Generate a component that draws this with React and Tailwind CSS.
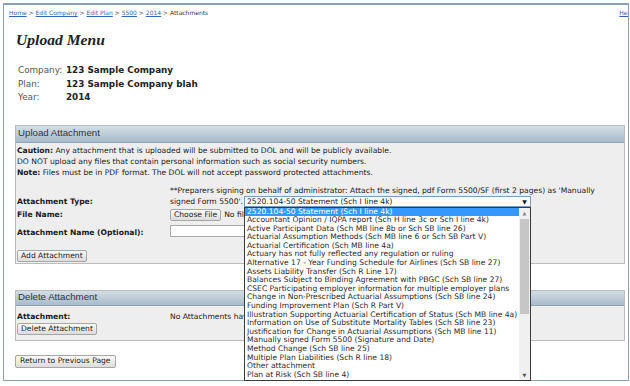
const ITEMS = [
  "2520.104-50 Statement (Sch I line 4k)",
  "Accountant Opinion / IQPA report (Sch H line 3c or Sch I line 4k)",
  "Active Participant Data (Sch MB line 8b or Sch SB line 26)",
  "Actuarial Assumption Methods (Sch MB line 6 or Sch SB Part V)",
  "Actuarial Certification (Sch MB line 4a)",
  "Actuary has not fully reflected any regulation or ruling",
  "Alternative 17 - Year Funding Schedule for Airlines (Sch SB line 27)",
  "Assets Liability Transfer (Sch R Line 17)",
  "Balances Subject to Binding Agreement with PBGC (Sch SB line 27)",
  "CSEC Participating employer information for multiple employer plans",
  "Change in Non-Prescribed Actuarial Assumptions (Sch SB line 24)",
  "Funding Improvement Plan (Sch R Part V)",
  "Illustration Supporting Actuarial Certification of Status (Sch MB line 4a)",
  "Information on Use of Substitute Mortality Tables (Sch SB line 23)",
  "Justification for Change in Actuarial Assumptions (Sch MB line 11)",
  "Manually signed Form 5500 (Signature and Date)",
  "Method Change (Sch SB line 25)",
  "Multiple Plan Liabilities (Sch R line 18)",
  "Other attachment",
  "Plan at Risk (Sch SB line 4)",
];

function Btn({ children, className = "" }) {
  return (
    <span
      className={
        "inline-flex items-center h-[12px] px-[3px] border border-[#a6a6a6] rounded-[2px] bg-linear-to-b from-[#fbfbfb] to-[#dcdcdc] text-[7.6px] leading-none text-[#222] whitespace-nowrap " +
        className
      }
    >
      {children}
    </span>
  );
}

function PanelHeader({ children, h }) {
  return (
    <div
      className={
        "bg-linear-to-b from-[#d3dee7] to-[#a7bbca] border-b border-[#8ea3b4] pl-[2px] font-['Liberation_Sans',Arial,sans-serif] text-[9.7px] text-[#333] flex items-center " +
        h
      }
    >
      {children}
    </div>
  );
}

export default function App() {
  return (
    <div className="w-[630px] h-[386px] bg-white overflow-hidden font-['DejaVu_Sans',Verdana,sans-serif]">
      <div className="ml-[3px] mt-[3px] w-[626px] h-[378px] border border-t-2 border-[#8aa0b6] relative">
        {/* breadcrumb */}
        <div className="flex justify-between pl-[5px] pt-[3px] h-[15px] text-[6px] leading-[10px] text-[#333] overflow-hidden">
          <div>
            <span className="text-[#3a63b0] underline">Home</span> &gt;{" "}
            <span className="text-[#3a63b0] underline">Edit Company</span> &gt;{" "}
            <span className="text-[#3a63b0] underline">Edit Plan</span> &gt;{" "}
            <span className="text-[#3a63b0] underline">5500</span> &gt;{" "}
            <span className="text-[#3a63b0] underline">2014</span> &gt; Attachments
          </div>
          <span className="text-[#3a63b0] underline mr-[-5px]">Help</span>
        </div>

        <h1 className="mt-[11px] pl-[12px] font-['Liberation_Serif',serif] italic font-bold text-[15.6px] leading-[18px] text-[#222]">
          Upload Menu
        </h1>

        <div className="mt-[15px] pl-[14px] grid grid-cols-[48px_auto] text-[8.8px] leading-[13.5px]">
          <span className="text-[#555]">Company:</span>
          <span className="font-bold text-[#222]">123 Sample Company</span>
          <span className="text-[#555]">Plan:</span>
          <span className="font-bold text-[#222]">123 Sample Company blah</span>
          <span className="text-[#555]">Year:</span>
          <span className="font-bold text-[#222]">2014</span>
        </div>

        {/* Upload panel */}
        <div className="mt-[20px] ml-[11px] w-[610px] border border-[#bcbcbc] bg-[#eeeeee]">
          <PanelHeader h="h-[17px]">Upload Attachment</PanelHeader>
          <div className="pl-[1px] pt-[2px] pb-[1px] text-[7.6px] leading-[11px] text-[#1a1a1a]">
            <div>
              <b>Caution:</b> Any attachment that is uploaded will be submitted to DOL and will be publicly available.
              <br />
              DO NOT upload any files that contain personal information such as social security numbers.
            </div>
            <div>
              <b>Note:</b> Files must be in PDF format. The DOL will not accept password protected attachments.
            </div>

            <div className="mt-[7px] flex">
              <div className="w-[153px] shrink-0 font-bold self-end">Attachment Type:</div>
              <div className="whitespace-nowrap">
                **Preparers signing on behalf of administrator: Attach the signed, pdf Form 5500/SF (first 2 pages) as 'Manually
                <br />
                signed Form 5500'.
                <span className="relative inline-block align-top ml-[1px] w-[287px] h-[11px] bg-white border border-[#7f9db9]">
                  <span className="absolute left-[2px] top-0 leading-[9px] whitespace-nowrap">
                    2520.104-50 Statement (Sch I line 4k)
                  </span>
                  <span className="absolute right-[3px] top-0 leading-[9px] text-[6px]">▼</span>
                  <div className="absolute left-[-1px] top-[10px] w-[287px] h-[174px] border border-[#3a3a3a] bg-white z-10 overflow-hidden">
                    <div className="absolute left-0 top-0 right-[11px]">
                      {ITEMS.map((t, i) => (
                        <div
                          key={t}
                          className={
                            "h-[8.6px] leading-[8.6px] pl-[2px] whitespace-nowrap " +
                            (i === 0 ? "bg-[#3399ff] text-white" : "text-[#2a1f2a]")
                          }
                        >
                          {t}
                        </div>
                      ))}
                    </div>
                    <div className="absolute right-0 top-0 bottom-0 w-[11px] bg-[#f0f0f0] flex flex-col items-center">
                      <span className="h-[10px] text-[5px] leading-[10px] text-[#888]">▲</span>
                      <span className="w-[9px] h-[95px] bg-[#c6c6c6] mt-[1px]"></span>
                      <span className="flex-1"></span>
                      <span className="h-[9px] text-[5px] leading-[9px] text-[#555]">▼</span>
                    </div>
                  </div>
                </span>
              </div>
            </div>

            <div className="mt-[2px] flex items-center">
              <div className="w-[153px] shrink-0 font-bold">File Name:</div>
              <Btn className="h-[11px]">Choose File</Btn>
              <span className="ml-[3px]">No file chosen</span>
            </div>

            <div className="mt-[4px] flex items-center">
              <div className="w-[153px] shrink-0 font-bold pt-[2px]">Attachment Name (Optional):</div>
              <span className="w-[200px] h-[12px] bg-white border border-[#a9a9a9]"></span>
            </div>

            <div className="mt-[12px] flex">
              <Btn>Add Attachment</Btn>
            </div>
          </div>
        </div>

        {/* Delete panel */}
        <div className="mt-[26px] ml-[11px] w-[610px] border border-[#bcbcbc] bg-[#eeeeee]">
          <PanelHeader h="h-[15px]">Delete Attachment</PanelHeader>
          <div className="pl-[1px] pt-[5px] pb-[5px] text-[7.6px] leading-[11px] text-[#1a1a1a]">
            <div className="flex">
              <div className="w-[153px] shrink-0 font-bold">Attachment:</div>
              <span>No Attachments have been uploaded.</span>
            </div>
            <div className="mt-[1px] flex">
              <Btn>Delete Attachment</Btn>
            </div>
          </div>
        </div>

        <div className="mt-[14px] ml-[11px] flex">
          <Btn className="h-[13px] px-[4px]">Return to Previous Page</Btn>
        </div>
      </div>
    </div>
  );
}
